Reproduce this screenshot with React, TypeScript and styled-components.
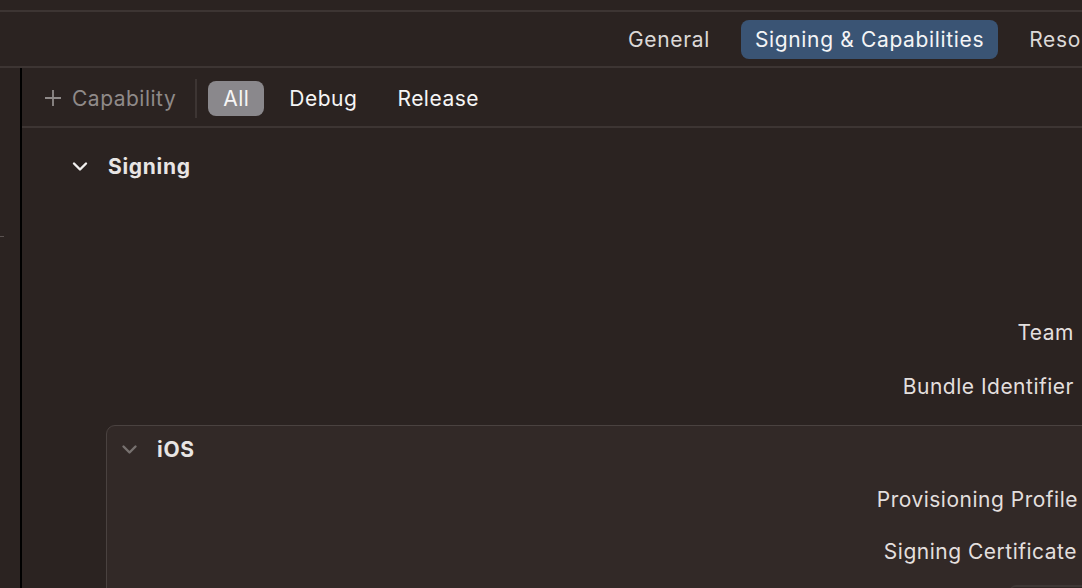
import React from "react";
import styled, { createGlobalStyle } from "styled-components";

const GlobalStyle = createGlobalStyle`
  html, body {
    margin: 0;
    padding: 0;
    background: #2b2321;
  }
  body {
    font-family: Inter, "Noto Sans", "Liberation Sans", sans-serif;
    color: #e6e2e1;
    -webkit-font-smoothing: antialiased;
  }
`;

const Window = styled.div`
  width: 1082px;
  height: 588px;
  overflow: hidden;
  background: #2b2321;
  display: flex;
  flex-direction: column;
  font-size: 21px;
  letter-spacing: 0.5px;
`;

const TopStrip = styled.div`
  height: 10px;
  flex: 0 0 auto;
  border-bottom: 2px solid #3d3533;
`;

const TabBar = styled.div`
  height: 54px;
  flex: 0 0 auto;
  display: flex;
  align-items: center;
  gap: 17px;
  padding-left: 614px;
  border-bottom: 2px solid #3d3533;
  white-space: nowrap;
  overflow: hidden;
`;

const Tab = styled.div<{ $active?: boolean }>`
  height: 39px;
  display: flex;
  align-items: center;
  padding: 0 14px;
  border-radius: 8px;
  letter-spacing: 0.65px;
  color: ${(p) => (p.$active ? "#f4f4f6" : "#dcd8d7")};
  background: ${(p) => (p.$active ? "#3a5474" : "transparent")};
  flex: 0 0 auto;
`;

const Body = styled.div`
  flex: 1;
  display: flex;
  min-height: 0;
`;

const Sidebar = styled.div`
  width: 20px;
  flex: 0 0 auto;
  border-right: 2px solid #000;
  padding-top: 168px;
`;

const Tick = styled.div`
  width: 4px;
  height: 1px;
  background: #5a5250;
`;

const Content = styled.div`
  flex: 1;
  display: flex;
  flex-direction: column;
  min-width: 0;
`;

const Toolbar = styled.div`
  flex: 0 0 auto;
  display: flex;
  align-items: center;
  padding: 2px 0 0 22px;
  box-sizing: border-box;
  height: 60px;
  border-bottom: 2px solid #3d3533;
  white-space: nowrap;
`;

const AddButton = styled.div`
  display: flex;
  align-items: center;
  gap: 10px;
  color: #8f8a89;
  padding-right: 19px;
`;

const Divider = styled.div`
  width: 2px;
  height: 39px;
  background: #3d3533;
  margin-right: 11px;
`;

const Filter = styled.div<{ $active?: boolean }>`
  height: 35px;
  display: flex;
  align-items: center;
  padding: 0 15px;
  margin-right: 10px;
  border-radius: 8px;
  color: #f6f5f5;
  background: ${(p) => (p.$active ? "#8a888c" : "transparent")};
`;

const Section = styled.div`
  padding-top: 18px;
  display: flex;
  flex-direction: column;
`;

const SectionHeader = styled.div`
  height: 40px;
  display: flex;
  align-items: center;
  gap: 20px;
  padding-left: 50px;
  font-weight: 700;
  letter-spacing: 0.7px;
  color: #e8e5e4;
`;

const Spacer = styled.div<{ $h: number }>`
  height: ${(p) => p.$h}px;
  flex: 0 0 auto;
`;

const Row = styled.div<{ $h: number; $label: number }>`
  height: ${(p) => p.$h}px;
  display: grid;
  grid-template-columns: ${(p) => p.$label}px 1fr;
  align-items: center;
  column-gap: 12px;
`;

const Label = styled.div`
  text-align: right;
  color: #e3dfde;
  white-space: nowrap;
`;

const PlatformBox = styled.div`
  margin-top: 12px;
  margin-left: 84px;
  width: 1200px;
  border: 1px solid #4a4240;
  border-radius: 9px;
  background: #322927;
  display: flex;
  flex-direction: column;
`;

const BoxHeader = styled.div`
  height: 47px;
  display: flex;
  align-items: center;
  gap: 19px;
  padding-left: 14px;
  font-weight: 700;
  letter-spacing: 0.7px;
  color: #e8e5e4;
`;

const PopupStub = styled.div`
  width: 120px;
  height: 34px;
  margin-top: 8px;
  align-self: start;
  border-top: 2px solid #3e3735;
  border-radius: 6px;
  background: #2f2725;
`;

const Chevron = ({ color, w }: { color: string; w: number }) => (
  <svg width={w} height={11} viewBox="0 0 16 11" fill="none">
    <path d="M2 2.5 L8 8.5 L14 2.5" stroke={color} strokeWidth={2.4} strokeLinecap="round" strokeLinejoin="round" />
  </svg>
);

const Plus = () => (
  <svg width={18} height={18} viewBox="0 0 18 18">
    <path d="M9 1v16M1 9h16" stroke="#8f8a89" strokeWidth={1.8} />
  </svg>
);

export default function App() {
  return (
    <Window>
      <GlobalStyle />
      <TopStrip />
      <TabBar>
        <Tab>General</Tab>
        <Tab $active>Signing &amp; Capabilities</Tab>
        <Tab>Resource Tags</Tab>
      </TabBar>
      <Body>
        <Sidebar>
          <Tick />
        </Sidebar>
        <Content>
          <Toolbar>
            <AddButton>
              <Plus />
              Capability
            </AddButton>
            <Divider />
            <Filter $active>All</Filter>
            <Filter>Debug</Filter>
            <Filter>Release</Filter>
          </Toolbar>
          <Section>
            <SectionHeader>
              <Chevron color="#f2f0ef" w={16} />
              Signing
            </SectionHeader>
            <Spacer $h={119} />
            <Row $h={54} $label={1052}>
              <Label>Team</Label>
              <div />
            </Row>
            <Row $h={54} $label={1052}>
              <Label>Bundle Identifier</Label>
              <div />
            </Row>
            <PlatformBox>
              <BoxHeader>
                <Chevron color="#77716f" w={17} />
                iOS
              </BoxHeader>
              <Row $h={52} $label={971}>
                <Label>Provisioning Profile</Label>
                <div />
              </Row>
              <Row $h={52} $label={970}>
                <Label>Signing Certificate</Label>
                <div />
              </Row>
              <Row $h={60} $label={891}>
                <div />
                <PopupStub />
              </Row>
            </PlatformBox>
          </Section>
        </Content>
      </Body>
    </Window>
  );
}
